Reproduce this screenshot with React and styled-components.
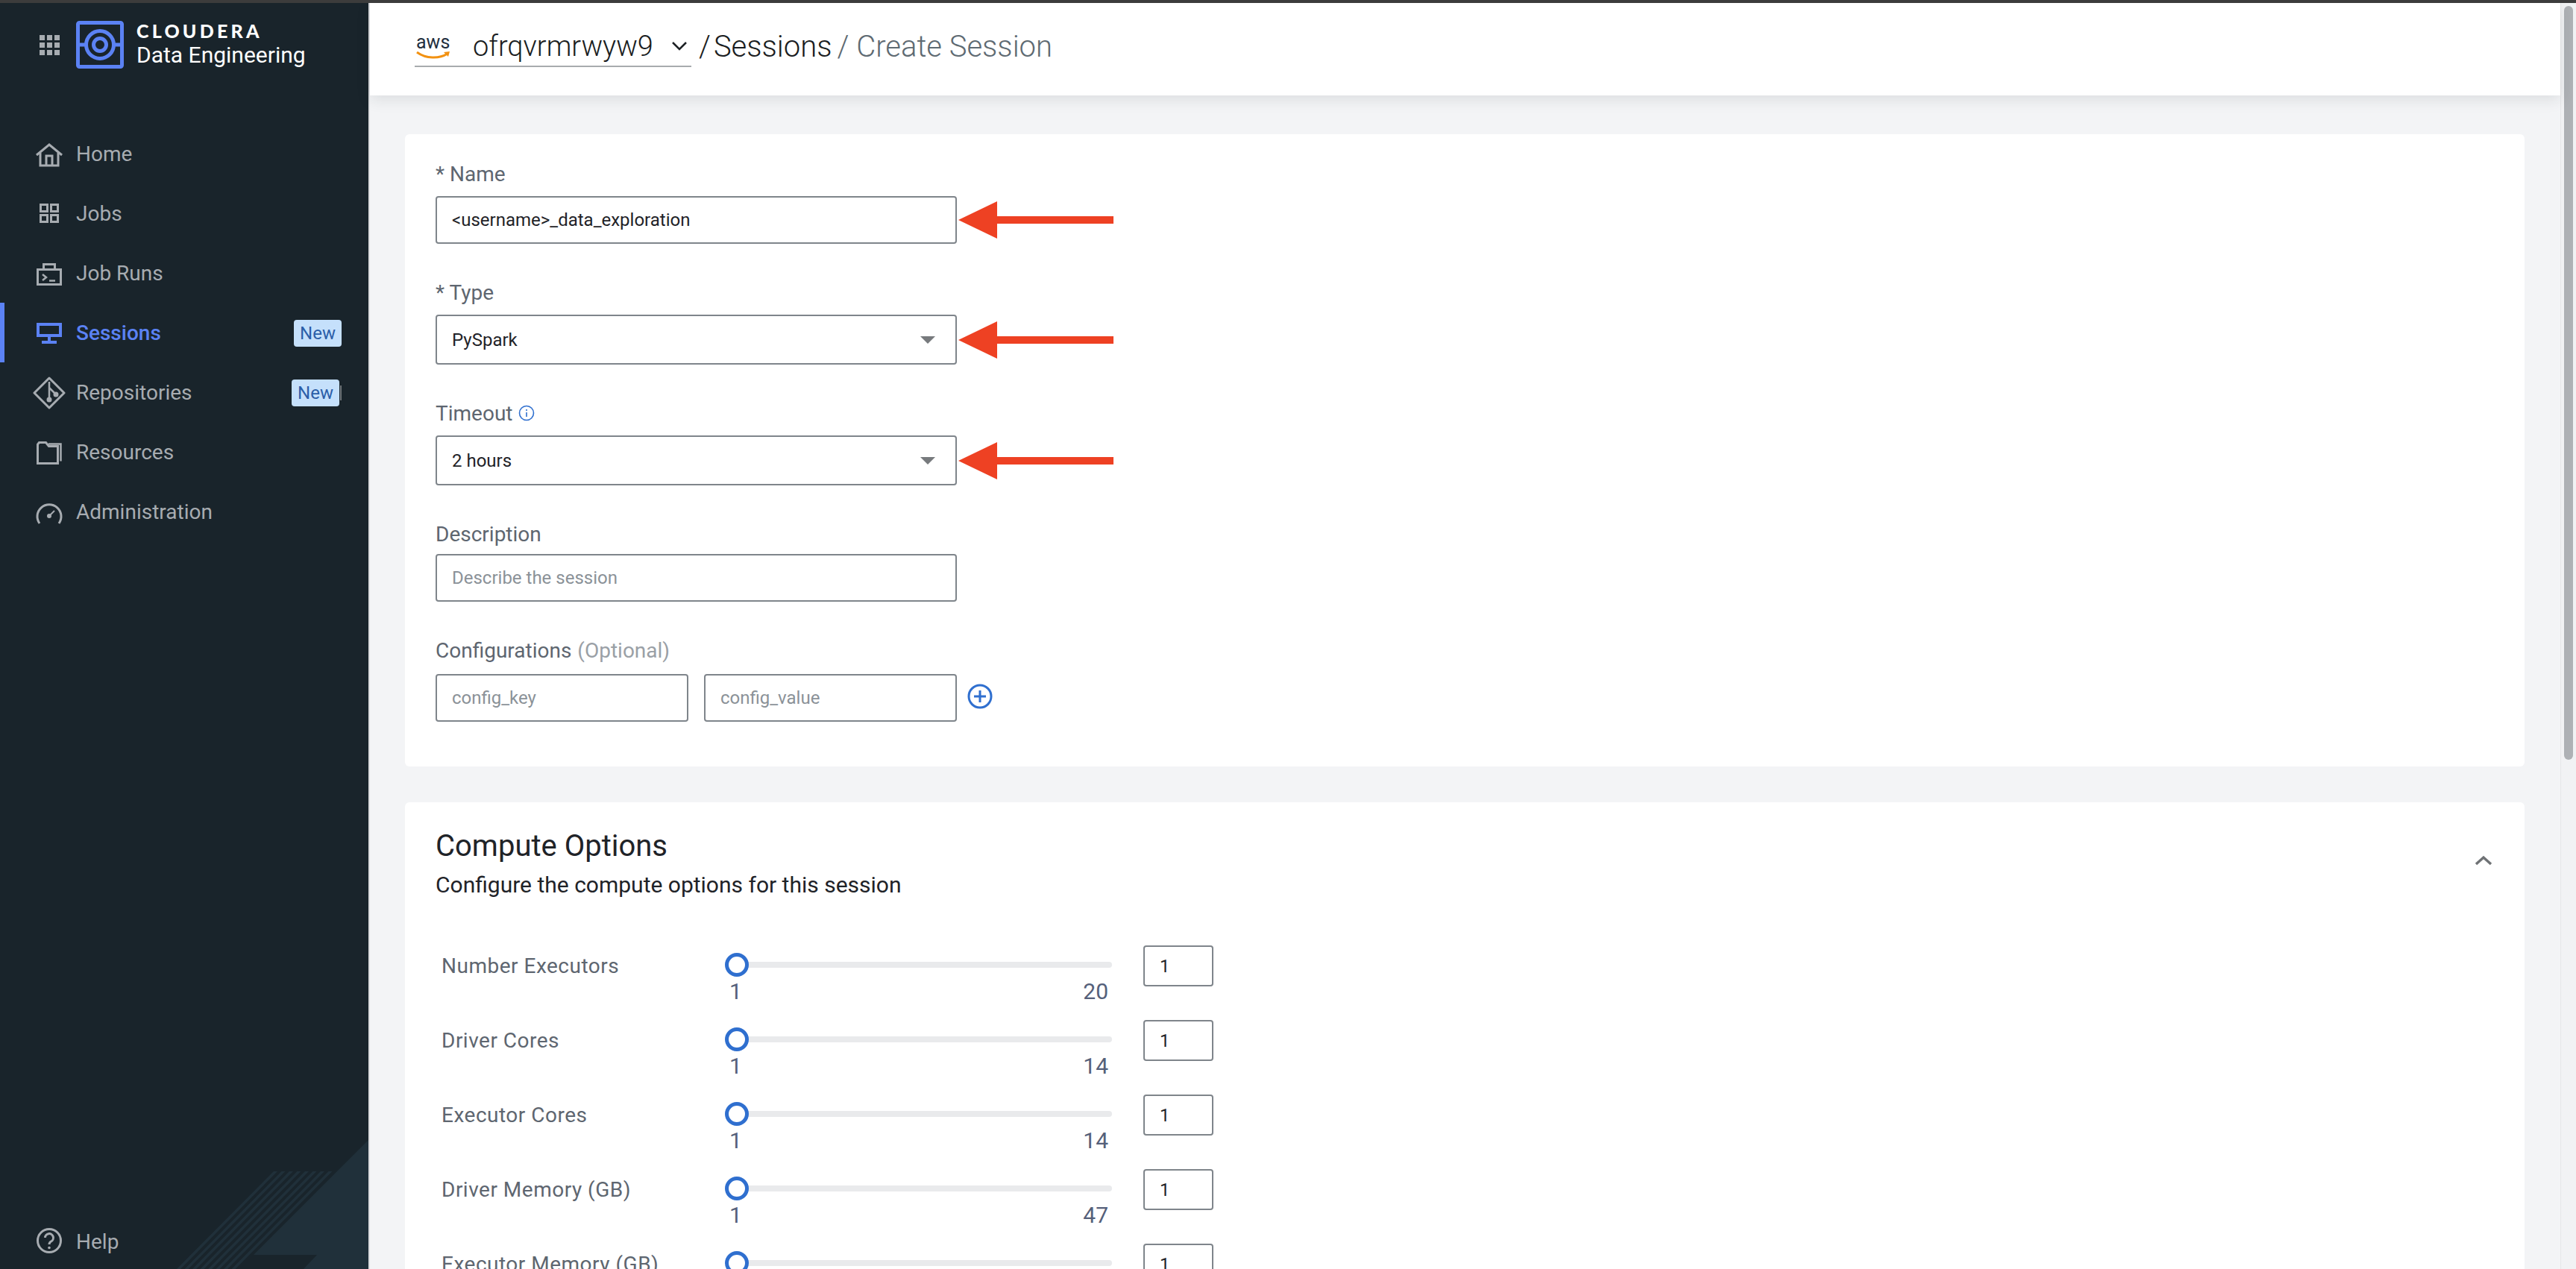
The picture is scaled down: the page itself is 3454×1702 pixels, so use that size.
import React from "react";
import styled, { createGlobalStyle } from "styled-components";

const navItems = [
  { label: "Home", icon: "home" },
  { label: "Jobs", icon: "jobs" },
  { label: "Job Runs", icon: "runs" },
  { label: "Sessions", icon: "sessions", active: true, badge: "New" },
  { label: "Repositories", icon: "repos", badge: "New", sliver: true },
  { label: "Resources", icon: "resources" },
  { label: "Administration", icon: "admin" },
];

// last row runs off the bottom of the window, its limits are never seen
const sliders = [
  { label: "Number Executors", max: 20 },
  { label: "Driver Cores", max: 14 },
  { label: "Executor Cores", max: 14 },
  { label: "Driver Memory (GB)", max: 47 },
  { label: "Executor Memory (GB)" },
];

function NavIcon({ name }) {
  const common = {
    width: 36,
    height: 36,
    viewBox: "0 0 36 36",
    fill: "none",
    stroke: "currentColor",
    strokeWidth: 3,
    style: { overflow: "visible" },
  };
  switch (name) {
    case "home":
      return (
        <svg {...common}>
          <path d="M1 20 18 6 35 20" />
          <path d="M6 17v17h24V17" />
          <path d="M14 34V21h8v13" />
        </svg>
      );
    case "jobs":
      return (
        <svg {...common}>
          <rect x="6.5" y="6.5" width="9" height="9" />
          <rect x="20.5" y="6.5" width="9" height="9" />
          <rect x="6.5" y="20.5" width="9" height="9" />
          <rect x="20.5" y="20.5" width="9" height="9" />
        </svg>
      );
    case "runs":
      return (
        <svg {...common}>
          <rect x="2.5" y="13.5" width="31" height="20" />
          <path d="M10.5 13V6.5h15V13" />
          <path d="m9 20 5 4-5 4M18 28.5h8" strokeWidth="2.5" />
        </svg>
      );
    case "sessions":
      return (
        <svg {...common} strokeWidth="4">
          <rect x="3" y="7" width="30" height="15" />
          <path d="M18 22v8" />
          <path d="M8 31h20" />
        </svg>
      );
    case "repos":
      return (
        <svg {...common} strokeLinejoin="round">
          <path d="M18 -1 38 19 18 39-2 19Z" />
          <path d="M18 4v24M18 12l9 9" strokeWidth="2.5" />
          <circle cx="18" cy="28" r="2" fill="currentColor" />
          <circle cx="27" cy="21" r="2" fill="currentColor" />
        </svg>
      );
    case "resources":
      return (
        <svg {...common}>
          <path d="M2.5 33.5V8l2-2.5h9l4 5h12v23Z" />
          <path d="M17 7.5h16.5v23" strokeWidth="2.5" />
        </svg>
      );
    case "admin":
      return (
        <svg {...common}>
          <path d="M5 34A16 16 0 1 1 31 34" />
          <circle cx="18" cy="24" r="3" fill="currentColor" stroke="none" />
          <path d="m18 24 7-7" strokeWidth="2" />
        </svg>
      );
    default:
      return (
        <svg {...common}>
          <circle cx="18" cy="18" r="15.5" />
          <path d="M12.5 14a5.5 5.5 0 1 1 8 5c-1.7 1-2.5 2-2.5 4" />
          <circle cx="18" cy="27.5" r="1.8" fill="currentColor" stroke="none" />
        </svg>
      );
  }
}

function Arrow() {
  return (
    <ArrowMark width="208" height="50" viewBox="0 0 208 50">
      <path d="M0 25 52 0v20h156v10H52v20Z" fill="#ee4123" />
    </ArrowMark>
  );
}

function Caret() {
  return (
    <CaretMark width="20" height="10" viewBox="0 0 20 10">
      <path d="M0 0h20L10 10Z" fill="#777a7d" />
    </CaretMark>
  );
}

export default function App() {
  return (
    <>
      <GlobalStyle />
      <TopEdge />
      <Shell>
        <Sidebar>
          <Corner width="494" height="173" viewBox="0 0 494 173">
            <path d="M494 0v173H407l18-19h-85L494 0Z" fill="#20303a" />
            {[0, 1, 2, 3, 4, 5, 6, 7].map((i) => (
              <path
                key={i}
                d={`M${367 + i * 10.5} 42h5L${242 + i * 10.5} 173h-5Z`}
                fill="#20303a"
              />
            ))}
          </Corner>
          <Brand>
            <AppsGrid>
              {Array.from({ length: 9 }).map((_, i) => (
                <span key={i} />
              ))}
            </AppsGrid>
            <svg width="64" height="64" viewBox="0 0 64 64" fill="none" stroke="#5b82f4" strokeWidth="5">
              <rect x="2.5" y="2.5" width="59" height="59" rx="2" />
              <circle cx="32" cy="32" r="18.5" />
              <circle cx="32" cy="32" r="8.5" />
              <path d="M3 32h10M51 32h10" />
            </svg>
            <BrandText>
              <BrandName>CLOUDERA</BrandName>
              <BrandProduct>Data Engineering</BrandProduct>
            </BrandText>
          </Brand>
          <Nav>
            {navItems.map((item) => (
              <NavRow key={item.label} $active={item.active}>
                <NavIcon name={item.icon} />
                <span>{item.label}</span>
                {item.badge ? <Badge $shift={item.sliver}>{item.badge}</Badge> : null}
              </NavRow>
            ))}
          </Nav>
          <HelpRow>
            <NavIcon name="help" />
            <span>Help</span>
          </HelpRow>
        </Sidebar>

        <Content>
          <Header>
            <ClusterPicker>
              <AwsMark>
                <span>aws</span>
                <svg width="46" height="10" viewBox="0 0 46 10" fill="none">
                  <path d="M1 1c12 9 30 9 41 2" stroke="#f29111" strokeWidth="3" />
                  <path d="m37 1 8-1-2 7" fill="#f29111" />
                </svg>
              </AwsMark>
              <ClusterName>ofrqvrmrwyw9</ClusterName>
              <svg width="22" height="12" viewBox="0 0 22 12" fill="none" stroke="#1d2125" strokeWidth="2.5">
                <path d="m2 1 9 9 9-9" />
              </svg>
            </ClusterPicker>
            <Crumb $first>/</Crumb>
            <Crumb>Sessions</Crumb>
            <Crumb $muted>/ Create Session</Crumb>
          </Header>

          <Body>
            <Card $pad="37px 47px 60px 41px">
              <Field>
                <FieldLabel>* Name</FieldLabel>
                <Control>
                  <TextInput defaultValue="<username>_data_exploration" />
                  <Arrow />
                </Control>
              </Field>
              <Field>
                <FieldLabel>* Type</FieldLabel>
                <Control>
                  <SelectBox defaultValue="PySpark">
                    <option>PySpark</option>
                    <option>Scala</option>
                  </SelectBox>
                  <Caret />
                  <Arrow />
                </Control>
              </Field>
              <Field>
                <FieldLabel>
                  Timeout
                  <svg width="22" height="22" viewBox="0 0 22 22" fill="none" stroke="#2f6fcf" strokeWidth="1.6">
                    <circle cx="11" cy="11" r="9.5" />
                    <path d="M11 10v6M11 6v2" />
                  </svg>
                </FieldLabel>
                <Control>
                  <SelectBox defaultValue="2 hours">
                    <option>1 hour</option>
                    <option>2 hours</option>
                  </SelectBox>
                  <Caret />
                  <Arrow />
                </Control>
              </Field>
              <Field $labelGap="11px">
                <FieldLabel>Description</FieldLabel>
                <Control>
                  <TextInput placeholder="Describe the session" />
                </Control>
              </Field>
              <Field $labelGap="16px">
                <FieldLabel>
                  Configurations <Optional>(Optional)</Optional>
                </FieldLabel>
                <ConfigRow>
                  <TextInput placeholder="config_key" />
                  <TextInput placeholder="config_value" />
                  <AddButton width="34" height="34" viewBox="0 0 34 34" fill="none" stroke="#2f6fcf" strokeWidth="3">
                    <circle cx="17" cy="17" r="15" />
                    <path d="M17 9v16M9 17h16" />
                  </AddButton>
                </ConfigRow>
              </Field>
            </Card>

            <Card $pad="35px 43px 0 41px">
              <SectionHead>
                <div>
                  <SectionTitle>Compute Options</SectionTitle>
                  <SectionNote>Configure the compute options for this session</SectionNote>
                </div>
                <svg width="24" height="14" viewBox="0 0 24 14" fill="none" stroke="#6f7275" strokeWidth="3.5">
                  <path d="m2 12 10-9 10 9" />
                </svg>
              </SectionHead>
              {sliders.map((s) => (
                <SliderRow key={s.label}>
                  <SliderLabel>{s.label}</SliderLabel>
                  <div>
                    <TrackArea>
                      <TrackBar />
                      <Thumb />
                    </TrackArea>
                    {s.max ? (
                      <Limits>
                        <span>1</span>
                        <span>{s.max}</span>
                      </Limits>
                    ) : null}
                  </div>
                  <NumberBox defaultValue="1" />
                </SliderRow>
              ))}
            </Card>
          </Body>
        </Content>

        <ScrollTrack>
          <ScrollThumb />
        </ScrollTrack>
      </Shell>
    </>
  );
}

const GlobalStyle = createGlobalStyle`
  html, body {
    margin: 0;
    height: 100%;
    overflow: hidden;
    background: #f3f4f6;
    font-family: Roboto, "Liberation Sans", sans-serif;
  }
  * {
    box-sizing: border-box;
  }
`;

const TopEdge = styled.div`
  height: 4px;
  background: #3c3c3c;
`;

const Shell = styled.div`
  display: flex;
  height: 1698px;
  overflow: hidden;
`;

const Sidebar = styled.aside`
  position: relative;
  flex: 0 0 496px;
  display: flex;
  flex-direction: column;
  background: #19242b;
  border-right: 2px solid #dcdde0;
  color: #a7acb1;
  font-size: 28px;
`;

const Corner = styled.svg`
  position: absolute;
  left: 0;
  bottom: 0;
`;

const Brand = styled.div`
  display: flex;
  align-items: center;
  padding: 24px 0 0 53px;
`;

const AppsGrid = styled.div`
  display: grid;
  grid-template-columns: repeat(3, 7px);
  grid-auto-rows: 7px;
  gap: 3px;
  margin-right: 22px;

  span {
    background: #a7acb1;
  }
`;

const BrandText = styled.div`
  margin-left: 17px;
  color: #fff;
`;

const BrandName = styled.div`
  font-family: Lato, sans-serif;
  font-weight: 900;
  font-size: 25px;
  line-height: 26px;
  letter-spacing: 4.2px;
`;

const BrandProduct = styled.div`
  margin-top: 2px;
  font-size: 30px;
  line-height: 36px;
`;

const Nav = styled.nav`
  margin-top: 74px;
`;

const NavRow = styled.div`
  position: relative;
  display: flex;
  align-items: center;
  gap: 18px;
  height: 80px;
  color: ${(p) => (p.$active ? "#5b82f4" : "#a7acb1")};
  font-weight: ${(p) => (p.$active ? 500 : 400)};
  border-left: ${(p) => (p.$active ? "6px solid #5b82f4" : "0")};
  padding-left: ${(p) => (p.$active ? "42px" : "48px")};
`;

const Badge = styled.span`
  position: absolute;
  top: 23px;
  left: ${(p) => (p.$shift ? "391px" : "388px")};
  width: 64px;
  height: 36px;
  border-radius: 4px;
  background: #c5e0fb;
  color: #2b5ea8;
  font-size: 24px;
  font-weight: 400;
  line-height: 36px;
  text-align: center;

  &::after {
    content: "";
    display: ${(p) => (p.$shift ? "block" : "none")};
    position: absolute;
    left: 65px;
    top: 8px;
    width: 2px;
    height: 20px;
    background: #6d7478;
  }
`;

const HelpRow = styled.div`
  position: relative;
  display: flex;
  align-items: center;
  gap: 18px;
  margin-top: auto;
  padding: 0 0 20px 48px;

  span {
    margin-top: 4px;
  }
`;

const Content = styled.main`
  flex: 1;
  min-width: 0;
  display: flex;
  flex-direction: column;
`;

const Header = styled.header`
  position: relative;
  z-index: 1;
  flex: 0 0 124px;
  display: flex;
  align-items: flex-start;
  padding: 32px 0 0 60px;
  background: #fff;
  box-shadow: 0 6px 18px rgba(30, 35, 40, 0.1);
`;

const ClusterPicker = styled.div`
  display: flex;
  align-items: center;
  width: 371px;
  height: 54px;
  padding-left: 2px;
  border-bottom: 2px solid #a8abae;
  color: #1a1d21;
`;

const AwsMark = styled.div`
  display: flex;
  flex-direction: column;
  width: 76px;
  color: #232f3e;
  font-size: 25px;
  line-height: 22px;

  svg {
    margin-top: 1px;
  }
`;

const ClusterName = styled.span`
  width: 264px;
  font-size: 38px;
  font-weight: 300;
  margin-right: 2px;
`;

const Crumb = styled.span`
  margin-left: ${(p) => (p.$first ? "10px" : p.$muted ? "7px" : "2px")};
  margin-right: ${(p) => (p.$first ? "2px" : "0")};
  font-size: 40px;
  font-weight: 300;
  line-height: 54px;
  color: ${(p) => (p.$muted ? "#5e6a72" : "#1a1d21")};
`;

const Body = styled.div`
  display: flex;
  flex-direction: column;
  gap: 48px;
  padding: 52px 48px 0 47px;
`;

const Card = styled.section`
  padding: ${(p) => p.$pad};
  background: #fff;
  border-radius: 6px;
`;

const Field = styled.div`
  width: 699px;
  margin-bottom: 49px;

  &:last-child {
    margin-bottom: 0;
  }

  label {
    margin-bottom: ${(p) => p.$labelGap || "14px"};
  }
`;

const FieldLabel = styled.label`
  display: flex;
  align-items: center;
  gap: 8px;
  height: 32px;
  color: #5e6670;
  font-size: 28px;
`;

const Optional = styled.span`
  color: #9aa0a6;
`;

const Control = styled.div`
  position: relative;
`;

const TextInput = styled.input`
  width: 100%;
  height: 64px;
  padding: 0 20px;
  border: 2px solid #7f858b;
  border-radius: 4px;
  background: #fff;
  color: #1f2328;
  font: 24px Roboto, sans-serif;

  &::placeholder {
    color: #8b9298;
    opacity: 1;
  }

  &:focus {
    outline: none;
  }
`;

const SelectBox = styled.select`
  display: block;
  width: 100%;
  height: 67px;
  padding: 0 20px;
  border: 2px solid #7f858b;
  border-radius: 4px;
  background: #fff;
  color: #1f2328;
  font: 24px Roboto, sans-serif;
  appearance: none;
`;

const CaretMark = styled.svg`
  position: absolute;
  left: 650px;
  top: 29px;
`;

const ArrowMark = styled.svg`
  position: absolute;
  left: 701px;
  top: 50%;
  margin-top: -25px;
`;

const ConfigRow = styled.div`
  position: relative;
  display: grid;
  grid-template-columns: 339px 339px;
  gap: 21px;
`;

const AddButton = styled.svg`
  position: absolute;
  left: 713px;
  top: 13px;
`;

const SectionHead = styled.div`
  display: flex;
  justify-content: space-between;
  align-items: flex-start;
  margin-bottom: 64px;

  svg {
    margin-top: 36px;
  }
`;

const SectionTitle = styled.h2`
  margin: 0 0 11px;
  color: #1f2328;
  font-size: 40px;
  font-weight: 400;
  line-height: 48px;
`;

const SectionNote = styled.div`
  color: #1f2328;
  font-size: 30px;
  line-height: 34px;
`;

const SliderRow = styled.div`
  display: grid;
  grid-template-columns: 338px 519px 94px;
  column-gap: 42px;
  align-items: start;
  height: 100px;
  padding-left: 8px;
`;

const SliderLabel = styled.div`
  margin-top: 12px;
  color: #5e6670;
  font-size: 28px;
  line-height: 32px;
  letter-spacing: 0.5px;
`;

const TrackArea = styled.div`
  position: relative;
  display: flex;
  align-items: center;
  height: 32px;
  margin-top: 10px;
  padding-left: 16px;
`;

const TrackBar = styled.div`
  flex: 1;
  height: 8px;
  border-radius: 4px;
  background: #e9eaec;
`;

const Thumb = styled.div`
  position: absolute;
  left: 0;
  top: 0;
  width: 32px;
  height: 32px;
  border: 5px solid #2f6fcf;
  border-radius: 50%;
  background: #fff;
`;

const Limits = styled.div`
  display: flex;
  justify-content: space-between;
  margin-top: 3px;
  padding: 0 5px 0 6px;
  color: #55607a;
  font-size: 30px;
  line-height: 34px;
`;

const NumberBox = styled.input`
  width: 94px;
  height: 55px;
  padding: 0 20px;
  border: 2px solid #7f858b;
  border-radius: 4px;
  color: #1f2328;
  font: 24px Roboto, sans-serif;
`;

const ScrollTrack = styled.div`
  flex: 0 0 20px;
  padding: 4px 4px 0;
  background: #f1f2f4;
  border-left: 1px solid #e6e7e9;
`;

const ScrollThumb = styled.div`
  width: 12px;
  height: 1011px;
  border-radius: 6px;
  background: #aeb1b5;
`;
